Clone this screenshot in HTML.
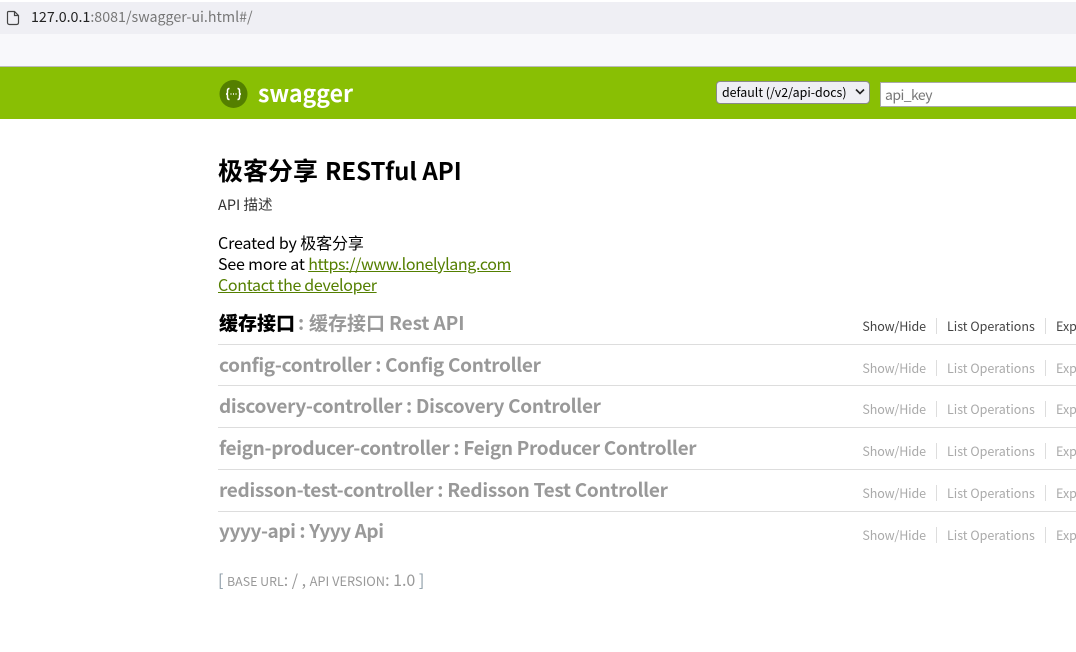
<!DOCTYPE html>
<html><head><meta charset="utf-8">
<style>
html,body{margin:0;padding:0;background:#fff;overflow:hidden}
body{width:1076px;height:652px;position:relative;font-family:"Noto Sans CJK SC","Liberation Sans",sans-serif;overflow:hidden}
.a{position:absolute;white-space:nowrap;line-height:1}
.box{position:absolute}
.t{font-size:19px;font-weight:700;color:#999;left:219px;letter-spacing:-.31px}
.t b{color:#000;letter-spacing:0}
.c{font-size:19px;font-weight:700;color:#999;letter-spacing:0}
.o{font-size:12.5px;color:#aaa}
.s{letter-spacing:-.12px;margin-left:-.6px}
.o.d{color:#444}
.sep{position:absolute;width:1px;height:16px;background:#ddd}
.hr{position:absolute;left:218px;width:858px;height:1px;background:#ddd}
a{text-decoration:underline}
</style></head><body>
<div class="box" style="left:0;top:0;width:1076px;height:2px;background:#fff"></div>
<div class="box" style="left:0;top:2px;width:1076px;height:32px;background:#efeff4"></div>
<div class="box" style="left:0;top:34px;width:1076px;height:32px;background:#f8f8fb"></div>
<div class="box" style="left:0;top:66px;width:1076px;height:1px;background:#bbb"></div>
<div class="box" style="left:0;top:67px;width:1076px;height:52px;background:#89bf04"></div>
<svg class="box" style="left:6px;top:10px" width="14" height="16" viewBox="0 0 14 16"><path d="M2.500 1.500H8.500L12.500 5.500V12.500Q12.500 14.500 10.500 14.500H3.500Q1.500 14.500 1.500 12.500V2.500Q1.500 1.500 2.500 1.500ZM8.500 1.500V5.500H12.500" fill="none" stroke="#444" stroke-width="1.200"/></svg>
<div class="a" style="left:31px;top:10px;font-size:14.25px;color:#222">127.0.0.1<span style="color:#777">:8081/swagger-ui.html#/</span></div>
<svg class="box" style="left:219px;top:80px" width="29" height="28" viewBox="0 0 29 28"><circle cx="14.500" cy="14" r="14" fill="#547f00"/><path d="M10.500 8.500Q8.500 8.500 8.500 10.500V12.500Q8.500 14 7 14Q8.500 14 8.500 15.500V17.500Q8.500 19.500 10.500 19.500M18.500 8.500Q20.500 8.500 20.500 10.500V12.500Q20.500 14 22 14Q20.500 14 20.500 15.500V17.500Q20.500 19.500 18.500 19.500" fill="none" stroke="#fff" stroke-width="1.500"/><path d="M11.500 14h1M14 14h1M16.500 14h1" stroke="#fff" stroke-width="1.400"/></svg>
<div class="a" style="left:258px;top:78px;font-size:23px;font-weight:700;color:#fff;line-height:28px">swagger</div>
<div class="box" style="left:716px;top:81px;width:152px;height:21px;background:#efeff4;border:1px solid #8a8a8a;border-radius:4px"></div>
<div class="a" style="left:722px;top:86px;font-size:12.4px;color:#000">default (/v2/api-docs)</div>
<svg class="box" style="left:854px;top:88px" width="12" height="8" viewBox="0 0 12 8"><path d="M2 1.500L6 5.500L10 1.500" fill="none" stroke="#222" stroke-width="1.600"/></svg>
<div class="box" style="left:880px;top:82px;width:196px;height:23px;background:#fff;border:1px solid #aaa;border-right:0"></div>
<div class="a" style="left:885px;top:88px;font-size:14px;color:#777;letter-spacing:-.55px">api_key</div>
<div class="a" style="left:218px;top:158px;font-size:25px;font-weight:700;color:#000">极客分享</div>
<div class="a" style="left:325px;top:158px;font-size:24px;font-weight:700;color:#000">RESTful API</div>
<div class="a" style="left:218px;top:198px;font-size:14.5px;color:#333">API 描述</div>
<div class="a" style="left:218px;top:234px;font-size:16px;color:#000;letter-spacing:-.12px">Created by 极客分享</div>
<div class="a" style="left:218px;top:255px;font-size:16px;color:#000;letter-spacing:-.17px">See more at <a style="color:#547f00;letter-spacing:-.38px">https://www.lonelylang.com</a></div>
<div class="a" style="left:218px;top:276px;font-size:16px;color:#547f00;letter-spacing:-.32px"><a>Contact the developer</a></div>
<div class="a t" style="top:313px"><b>缓存接口</b></div>
<div class="a c" style="left:298px;top:313px">:</div>
<div class="a c" style="left:309px;top:313px">缓存接口</div>
<div class="a c" style="left:389px;top:313px;letter-spacing:-.1px">Rest API</div>
<div class="a t" style="top:355px">config-controller : Config Controller</div>
<div class="a t" style="top:396px;letter-spacing:-.33px">discovery-controller : Discovery Controller</div>
<div class="a t" style="top:438px;letter-spacing:-.33px">feign-producer-controller : Feign Producer Controller</div>
<div class="a t" style="top:480px;letter-spacing:-.29px">redisson-test-controller : Redisson Test Controller</div>
<div class="a t" style="top:521px;letter-spacing:-.42px">yyyy-api : Yyyy Api</div>
<div class="hr" style="top:344px"></div>
<div class="hr" style="top:385px"></div>
<div class="hr" style="top:427px"></div>
<div class="hr" style="top:469px"></div>
<div class="hr" style="top:511px"></div>
<div class="a o d s" style="left:863px;top:320px">Show/Hide</div><div class="sep" style="left:936px;top:318px"></div><div class="a o d" style="left:947px;top:320px">List Operations</div><div class="sep" style="left:1045px;top:318px"></div><div class="a o d" style="left:1056px;top:320px">Exp</div>
<div class="a o s" style="left:863px;top:362px">Show/Hide</div><div class="sep" style="left:936px;top:360px"></div><div class="a o" style="left:947px;top:362px">List Operations</div><div class="sep" style="left:1045px;top:360px"></div><div class="a o" style="left:1056px;top:362px">Exp</div>
<div class="a o s" style="left:863px;top:403px">Show/Hide</div><div class="sep" style="left:936px;top:401px"></div><div class="a o" style="left:947px;top:403px">List Operations</div><div class="sep" style="left:1045px;top:401px"></div><div class="a o" style="left:1056px;top:403px">Exp</div>
<div class="a o s" style="left:863px;top:445px">Show/Hide</div><div class="sep" style="left:936px;top:443px"></div><div class="a o" style="left:947px;top:445px">List Operations</div><div class="sep" style="left:1045px;top:443px"></div><div class="a o" style="left:1056px;top:445px">Exp</div>
<div class="a o s" style="left:863px;top:487px">Show/Hide</div><div class="sep" style="left:936px;top:485px"></div><div class="a o" style="left:947px;top:487px">List Operations</div><div class="sep" style="left:1045px;top:485px"></div><div class="a o" style="left:1056px;top:487px">Exp</div>
<div class="a o s" style="left:863px;top:529px">Show/Hide</div><div class="sep" style="left:936px;top:527px"></div><div class="a o" style="left:947px;top:529px">List Operations</div><div class="sep" style="left:1045px;top:527px"></div><div class="a o" style="left:1056px;top:529px">Exp</div>
<div class="a" style="left:218px;top:571px;font-size:16px;color:#999"><span style="color:#8a9aa5">[</span> <span style="font-size:12.4px;color:#999">BASE URL</span>: / , <span style="font-size:12.8px">API VERSION</span>: 1.0 <span style="color:#8a9aa5">]</span></div>
</body></html>
